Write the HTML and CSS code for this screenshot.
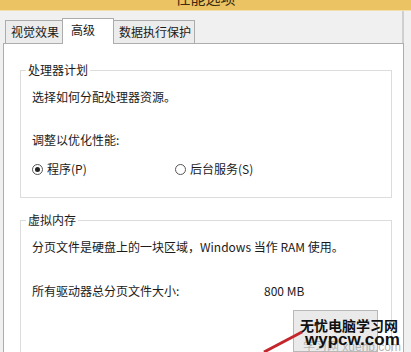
FILE: index.html
```html
<!DOCTYPE html>
<html lang="zh-CN">
<head>
    <meta charset="UTF-8">
    <meta name="viewport" content="width=device-width, initial-scale=1.0">
    <title>性能选项</title>
    <link rel="stylesheet" href="styles.css">
</head>
<body>
    <div class="titlebar"><span>性能选项</span></div>
    <div class="dialog">
        <div class="tabs">
            <div class="tab">视觉效果</div>
            <div class="tab active">高级</div>
            <div class="tab">数据执行保护</div>
        </div>
        <div class="panel">
            <fieldset class="group group-cpu">
                <legend>处理器计划</legend>
                <p class="line first">选择如何分配处理器资源。</p>
                <p class="line gap">调整以优化性能:</p>
                <div class="radios">
                    <label class="option"><span class="radio checked"></span>程序(P)</label>
                    <label class="option"><span class="radio"></span>后台服务(S)</label>
                </div>
            </fieldset>
            <fieldset class="group group-mem">
                <legend>虚拟内存</legend>
                <p class="line first">分页文件是硬盘上的一块区域，Windows 当作 RAM 使用。</p>
                <div class="line size-row">
                    <span class="size-label">所有驱动器总分页文件大小:</span>
                    <span>800 MB</span>
                </div>
            </fieldset>
        </div>
    </div>

    <div class="watermark">
        <div class="wm-name">无忧电脑学习网</div>
        <div class="wm-faint">学习网 xuehb.com</div>
        <div class="wm-url">wypcw.com</div>
    </div>
    <svg class="arrow" width="60" height="40" viewBox="0 0 60 40">
        <line x1="2" y1="40" x2="40" y2="20" stroke="#c3262b" stroke-width="3"/>
    </svg>
</body>
</html>
```

FILE: styles.css
```css
html { overflow: hidden; }
body { margin: 0; width: 411px; height: 352px; overflow: hidden; background: #f0f0f0; font-family: "Noto Sans CJK SC", "Liberation Sans", sans-serif; font-size: 12px; color: #1a1a1a; position: relative; }
.titlebar { height: 10px; background: #ebc363; overflow: hidden; text-align: center; border-bottom: 1px solid #f3dfae; }
.titlebar span { display: block; font-size: 15px; line-height: 15px; margin-top: -10px; color: #3a2a10; }
.dialog { padding: 7px 0 0 3px; border-right: 2px solid #cfcfcf; width: 404px; box-sizing: border-box; }
.tabs { display: flex; padding-left: 2px; height: 25px; align-items: flex-end; }
.tab { box-sizing: border-box; height: 23px; line-height: 21px; padding-left: 5px; white-space: nowrap; border: 1px solid #acacac; border-bottom: none; background: #ececec; margin-right: -1px; }
.tab:nth-child(1) { width: 58px; }
.tab:nth-child(3) { width: 82px; }
.tab.active { width: 52px; height: 26px; line-height: 22px; padding-left: 8px; background: #fff; position: relative; z-index: 1; margin-bottom: -1px; }
.panel { width: 401px; height: 309px; overflow: hidden; background: #fff; border: 1px solid #adadad; border-bottom: none; box-sizing: border-box; }
.group { box-sizing: border-box; width: 372px; margin: 18px 0 0 16px; padding: 0 11px; border: 1px solid #dcdcdc; }
.group legend { margin-left: -6px; padding: 0 2px; line-height: 16px; }
.group-cpu { padding-bottom: 20px; }
.group-mem { margin-top: 14px; height: 150px; }
.line { margin: 0; line-height: 16px; white-space: nowrap; }
.line.first { margin-top: 11px; }
.line.gap { margin-top: 27px; }
.radios { display: flex; margin-top: 13px; line-height: 16px; }
.option { display: flex; align-items: center; gap: 4px; }
.option:first-child { width: 143px; }
.radio { width: 11px; height: 11px; box-sizing: border-box; border: 1px solid #555; border-radius: 50%; display: flex; align-items: center; justify-content: center; }
.radio.checked::after { content: ""; width: 5px; height: 5px; border-radius: 50%; background: #222; }
.size-row { display: flex; margin-top: 28px; }
.size-label { width: 232px; }
.watermark { position: absolute; left: 293px; top: 310px; width: 85px; height: 42px; background: #eaeaea; border: 1px solid #b8b8b8; box-sizing: border-box; }
.wm-name { position: absolute; left: 6px; top: 6px; font-size: 14px; font-weight: bold; line-height: 16px; white-space: nowrap; color: #111; }
.wm-faint { position: absolute; left: 9px; top: 30px; font-family: "Liberation Sans", sans-serif; font-size: 12px; line-height: 12px; color: #b4b4b4; white-space: nowrap; }
.wm-url { position: absolute; left: 11px; top: 20px; font-family: "Liberation Sans", sans-serif; font-size: 17px; font-weight: bold; line-height: 17px; color: #111; white-space: nowrap; }
.arrow { position: absolute; left: 262px; top: 312px; }
```
